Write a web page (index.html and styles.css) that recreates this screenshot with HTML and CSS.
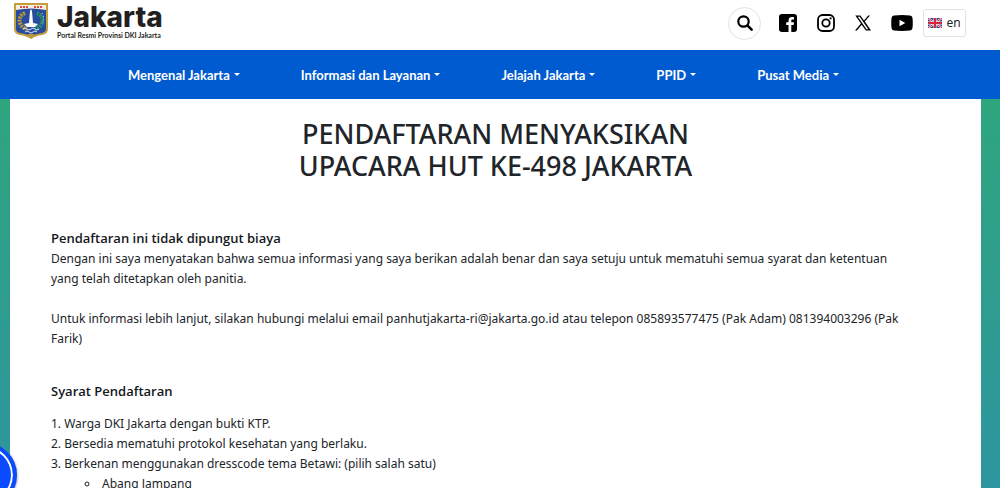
FILE: index.html
```
<!DOCTYPE html>
<html lang="id">

<head>
    <meta charset="UTF-8">
    <meta name="viewport" content="width=device-width, initial-scale=1.0">
    <title>Pendaftaran Upacara HUT Jakarta</title>
    <link rel="stylesheet" href="styles.css">
</head>

<body>

    <header class="topbar">
        <a class="brand" href="#">
            <svg class="crest" viewBox="0 0 34 36" aria-hidden="true">
                <path d="M1 1H33V26Q33 30 28 31Q21 32 17 35Q13 32 6 31Q1 30 1 26Z" fill="#284b9c" stroke="#c3a03c" stroke-width="2"/>
                <path d="M2 2H32V7Q17 4 2 7Z" fill="#f8eee0"/>
                <path d="M6 4h8M20 4h8" stroke="#dc4a45" stroke-width="2" stroke-dasharray="2 1"/>
                <path d="M11 10Q4 13 6 20Q8 25 13 26" fill="none" stroke="#b79a35" stroke-width="4" stroke-dasharray="2 1"/>
                <path d="M23 10Q30 13 28 20Q26 25 21 26" fill="none" stroke="#25936c" stroke-width="4" stroke-dasharray="2 1"/>
                <path d="M28 10Q31 15 28 21" fill="none" stroke="#e8f0dd" stroke-width="1" stroke-dasharray="1 2"/>
                <path d="M17 6L18 8L19 20L24 21L21 24H13L10 21L15 20L16 8Z" fill="#fff"/>
                <path d="M9 26q2-2 4 0t4 0t4 0t4 0M11 29q2-2 4 0t4 0t4 0" fill="none" stroke="#dfe6f5" stroke-width="1"/>
                <path d="M13 31h8l-4 3z" fill="#c3a03c"/>
            </svg>
            <span class="brand-text">
                <span class="brand-name">Jakarta</span>
                <span class="brand-sub">Portal Resmi Provinsi DKI Jakarta</span>
            </span>
        </a>

        <div class="tools">
            <button class="search" type="button" aria-label="Cari">
                <svg width="16" height="16" viewBox="0 0 16 16" fill="none" stroke="#000" stroke-linecap="round">
                    <circle cx="6.5" cy="6.5" r="5.2" stroke-width="2.2"/>
                    <path d="M10.6 10.6L14.6 14.6" stroke-width="2.6"/>
                </svg>
            </button>
            <div class="social">
                <a href="#" aria-label="Facebook">
                    <svg width="18" height="18" viewBox="0 0 18 18">
                        <rect width="18" height="18" rx="3"/>
                        <path d="M9.5 18V11H7.2V8.3H9.5V6.5C9.5 4.1 11 3 13 3C14 3 14.8 3.1 15 3.2V5.6H13.6C12.5 5.6 12.3 6.1 12.3 6.9V8.3H15L14.6 11H12.3V18Z" fill="#fff"/>
                    </svg>
                </a>
                <a href="#" aria-label="Instagram">
                    <svg width="18" height="18" viewBox="0 0 18 18" fill="none" stroke="#000" stroke-width="1.8">
                        <rect x="1" y="1" width="16" height="16" rx="4.5"/>
                        <circle cx="9" cy="9" r="3.7"/>
                        <circle cx="13.6" cy="4.4" r="1.1" fill="#000" stroke="none"/>
                    </svg>
                </a>
                <a href="#" aria-label="X">
                    <svg width="16" height="16" viewBox="0 0 16 16">
                        <path d="M0.3 0.5H5.4L9 5.5L13.2 0.5H15L9.8 6.5L16 15.5H10.8L6.7 9.8L1.9 15.5H0L5.9 8.6ZM2.8 1.8L11.5 14.2H13.3L4.7 1.8Z" fill-rule="evenodd"/>
                    </svg>
                </a>
                <a href="#" aria-label="YouTube">
                    <svg width="22" height="16" viewBox="0 0 22 16">
                        <path d="M3 .5Q11-.4 19 .5Q21.2 .8 21.5 3Q22 8 21.5 13Q21.2 15.2 19 15.5Q11 16.4 3 15.5Q.8 15.2 .5 13Q0 8 .5 3Q.8 .8 3 .5Z"/>
                        <path d="M8.5 4.8L14.3 8L8.5 11.2Z" fill="#fff"/>
                    </svg>
                </a>
            </div>
            <button class="lang" type="button">
                <svg width="14" height="10" viewBox="0 0 14 10" aria-hidden="true">
                    <rect width="14" height="10" fill="#34438c"/>
                    <path d="M0 0L14 10M14 0L0 10" stroke="#f3e6ee" stroke-width="2"/>
                    <path d="M0 0L14 10M14 0L0 10" stroke="#d2374c" stroke-width="1"/>
                    <path d="M7 0V10M0 5H14" stroke="#fff" stroke-width="3"/>
                    <path d="M7 0V10M0 5H14" stroke="#d2273c" stroke-width="2"/>
                </svg>
                en
            </button>
        </div>
    </header>

    <nav class="menu">
        <a href="#">Mengenal Jakarta</a>
        <a href="#">Informasi dan Layanan</a>
        <a href="#">Jelajah Jakarta</a>
        <a href="#">PPID</a>
        <a href="#">Pusat Media</a>
    </nav>

    <main class="page">
        <div class="content">
            <h1>PENDAFTARAN MENYAKSIKAN<br>UPACARA HUT KE-498 JAKARTA</h1>

            <section class="intro">
                <strong>Pendaftaran ini tidak dipungut biaya</strong>
                <p>Dengan ini saya menyatakan bahwa semua informasi yang saya berikan adalah benar dan saya setuju untuk mematuhi semua syarat dan ketentuan yang telah ditetapkan oleh panitia.</p>
                <p>Untuk informasi lebih lanjut, silakan hubungi melalui email panhutjakarta-ri@jakarta.go.id atau telepon 085893577475 (Pak Adam) 081394003296 (Pak Farik)</p>
            </section>

            <section class="terms">
                <h2>Syarat Pendaftaran</h2>
                <ol>
                    <li>Warga DKI Jakarta dengan bukti KTP.</li>
                    <li>Bersedia mematuhi protokol kesehatan yang berlaku.</li>
                    <li>Berkenan menggunakan dresscode tema Betawi: (pilih salah satu)
                        <ul>
                            <li>Abang Jampang</li>
                        </ul>
                    </li>
                </ol>
            </section>
        </div>
    </main>

    <button class="chat" type="button" aria-label="Chat"></button>

</body>

</html>
```
FILE: styles.css
```
* {
    box-sizing: border-box;
}

body {
    display: flex;
    flex-direction: column;
    height: 100vh;
    margin: 0;
    overflow: hidden;
    font-family: "Noto Sans", sans-serif;
    font-size: 12px;
    line-height: 20px;
    color: #212529;
}

a {
    color: inherit;
    text-decoration: none;
}

svg {
    display: block;
}

button {
    padding: 0;
    background-color: #fff;
    font: inherit;
    color: inherit;
    cursor: pointer;
}

.topbar {
    display: flex;
    flex-shrink: 0;
    justify-content: space-between;
    height: 50px;
    padding: 3px 34px 0 14px;
}

.brand {
    display: flex;
    align-items: flex-start;
    gap: 9px;
    font-family: Inter, sans-serif;
    color: #231f20;
}

.crest {
    width: 34px;
    height: 36px;
}

.brand-text {
    display: flex;
    flex-direction: column;
}

.brand-name {
    font-size: 28px;
    font-weight: 800;
    line-height: 28px;
}

.brand-sub {
    font-family: Lato, sans-serif;
    font-size: 7px;
    font-weight: bold;
    line-height: 9px;
}

.tools {
    display: flex;
    align-items: center;
    height: 40px;
}

.search {
    display: flex;
    align-items: center;
    justify-content: center;
    width: 33px;
    height: 33px;
    margin-right: 18px;
    border: 1px solid #dee2e6;
    border-radius: 50%;
}

.social {
    display: flex;
    align-items: center;
    gap: 20px;
    margin-right: 10px;
}

.lang {
    display: flex;
    align-items: center;
    justify-content: center;
    gap: 4px;
    width: 43px;
    height: 28px;
    border: 1px solid #dee2e6;
    border-radius: 3px;
}

.menu {
    display: flex;
    flex-shrink: 0;
    align-items: center;
    gap: 61px;
    height: 49px;
    padding-left: 128px;
    background-color: #005bd0;
    font-family: Lato, sans-serif;
    font-size: 13px;
    font-weight: bold;
    color: #fff;
}

.menu a {
    display: flex;
    align-items: center;
    gap: 4px;
    white-space: nowrap;
}

.menu a::after {
    content: "";
    border-top: 3px solid #fff;
    border-right: 3px solid transparent;
    border-left: 3px solid transparent;
}

.page {
    flex: 1;
    min-height: 0;
    padding: 0 19px 0 10px;
    background: linear-gradient(#2fa57e, #2d959f);
}

.content {
    padding: 19px 41px;
    background-color: #fff;
}

h1 {
    margin: 0 0 46px;
    font-size: 27px;
    font-weight: 500;
    line-height: 32px;
    text-align: center;
}

strong,
h2 {
    font-family: "Open Sans", sans-serif;
    font-size: 13px;
    font-weight: 600;
    line-height: 20px;
    color: #15181b;
}

p {
    margin: 0 0 20px;
}

.intro {
    padding-right: 28px;
}

.terms {
    padding-top: 12px;
}

h2 {
    margin: 0 0 13px;
}

ol {
    margin: 0;
    padding: 0;
    list-style-position: inside;
}

ul {
    padding-left: 34px;
    list-style-type: circle;
}

.chat {
    position: fixed;
    bottom: -20px;
    left: -49px;
    width: 66px;
    height: 66px;
    border: 4px solid #0a4bff;
    border-radius: 50%;
    background-color: #0a4bff;
    box-shadow: inset 0 0 0 2px #fff, 0 1px 3px #888;
}
```
